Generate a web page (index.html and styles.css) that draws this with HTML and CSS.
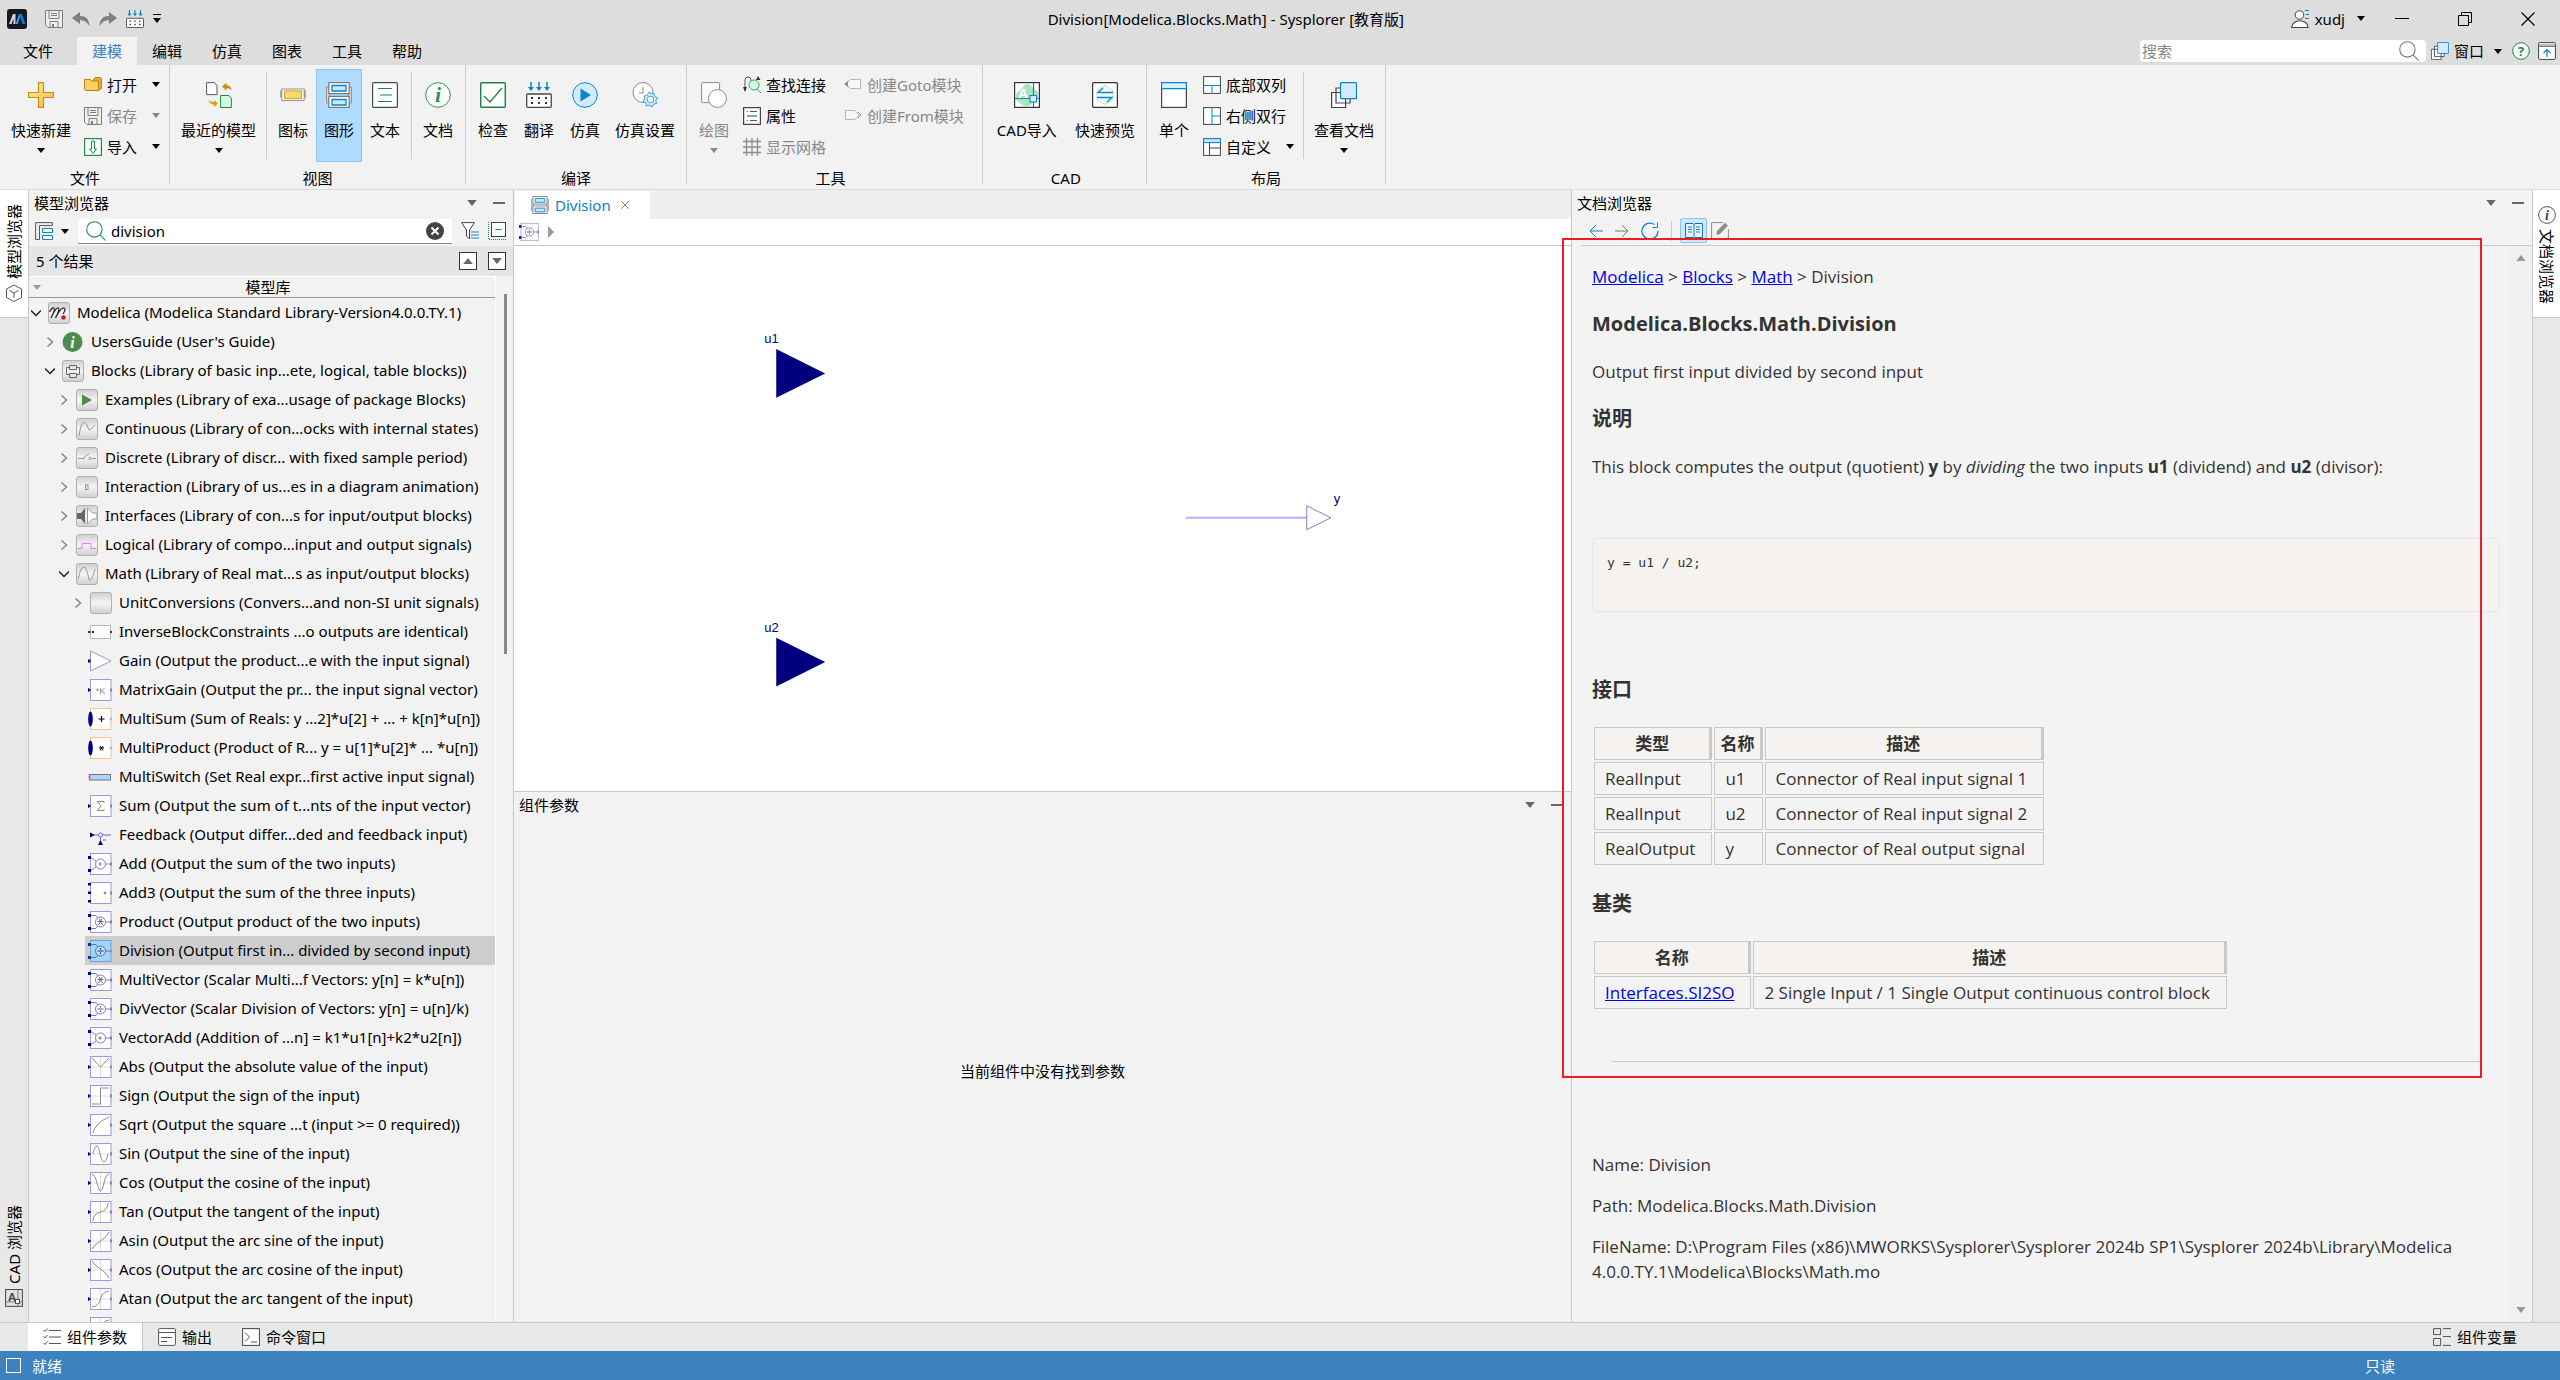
FILE: index.html
```html
<!DOCTYPE html>
<html lang="zh-CN">
<head>
    <meta charset="UTF-8">
    <meta name="viewport" content="width=device-width, initial-scale=1.0">
    <title>Division[Modelica.Blocks.Math] - Sysplorer [教育版]</title>
    <link rel="stylesheet" href="styles.css">
</head>
<body>
    <!-- icon definitions -->
    <svg class="defs" aria-hidden="true">
        <defs>
            <linearGradient id="g-pkg" x1="0" y1="0" x2="0" y2="1">
                <stop offset="0" stop-color="#cfcfcf"/><stop offset="0.5" stop-color="#f4f4f4"/><stop offset="1" stop-color="#cfcfcf"/>
            </linearGradient>
            <linearGradient id="g-gold" x1="0" y1="0" x2="1" y2="1">
                <stop offset="0" stop-color="#ffe9a8"/><stop offset="1" stop-color="#f4bd3a"/>
            </linearGradient>
        </defs>
        <symbol id="i-logo" viewBox="0 0 20 20"><rect width="20" height="20" rx="3" fill="#15181c"/><path d="M2 15 6 5h2.500v10H6.500V9.500L4.500 15z" fill="#cfd4d8"/><path d="M8.500 15 12 5h2l-3 10z" fill="#2f9bf0"/><path d="M12 5h3l3.500 10H15.500L13.500 9z" fill="#0d7ce0"/></symbol>
        <symbol id="i-save" viewBox="0 0 18 18"><path d="M.5.5h17v17H3L.5 15z" fill="#efefef" stroke="#7d7d7d"/><path d="M4 .5v8h10v-8M5 11.500h8v6H5zM6 3.500h6M6 5.500h6" fill="none" stroke="#7d7d7d"/><path d="M7 14h2v3H7z" fill="#7d7d7d"/></symbol>
        <symbol id="i-undo" viewBox="0 0 18 18"><path d="M0 8 8 2v4c6 0 9 3 9.500 10C15 12 12 10 8 10v4z" fill="#7f7f7f"/></symbol>
        <symbol id="i-redo" viewBox="0 0 18 18"><path d="M18 8 10 2v4C4 6 1 9 .5 16 3 12 6 10 10 10v4z" fill="#7f7f7f"/></symbol>
        <symbol id="i-trans" viewBox="0 0 26 26"><path d="M5 0v7M13 0v7M21 0v7" stroke="#0a84cc" stroke-width="1.500"/><path d="M2 5l3 4 3-4zM10 5l3 4 3-4zM18 5l3 4 3-4z" fill="#0a84cc"/><rect x=".7" y="12" width="24.600" height="13.300" rx="1" fill="#fff" stroke="#4a4a4a" stroke-width="1.300"/><path d="M5 16h2M12 16h2M19 16h2M5 21h2M12 21h2M19 21h2" stroke="#333" stroke-width="2"/></symbol>
        <symbol id="i-down" viewBox="0 0 8 5"><path d="M0 0h8L4 5z" fill="currentColor"/></symbol>
        <symbol id="i-up" viewBox="0 0 8 5"><path d="M0 5h8L4 0z" fill="currentColor"/></symbol>
        <symbol id="i-more" viewBox="0 0 8 9"><path d="M0 .5h8" stroke="#000"/><path d="M0 4h8L4 9z"/></symbol>
        <symbol id="i-user" viewBox="0 0 18 18"><circle cx="8.500" cy="5" r="4.300" fill="#fff" stroke="#444"/><path d="M.7 17.500c0-9 16.400-9 16.400 0z" fill="#fff" stroke="#444" stroke-width="1.200"/><path d="M14 .5h4M15 4.500h3M14 8.500h4" stroke="#0a84cc"/></symbol>
        <symbol id="i-min" viewBox="0 0 14 14"><path d="M0 6.500h14" stroke="#000"/></symbol>
        <symbol id="i-restore" viewBox="0 0 14 14"><path d="M.5 3.500h10v10H.5zM3.500 3.500v-3h10v10h-3" fill="none" stroke="#000"/></symbol>
        <symbol id="i-close" viewBox="0 0 14 14"><path d="M.5.5l13 13M13.500.5l-13 13" stroke="currentColor" stroke-width="1.200"/></symbol>
        <symbol id="i-search" viewBox="0 0 19 19"><circle cx="8" cy="8" r="7.300" fill="none" stroke="currentColor"/><path d="M13.500 13.500 18.500 18.500" stroke="currentColor"/></symbol>
        <symbol id="i-stack" viewBox="0 0 26 26"><path d="M.6 10.500h14v15H.6z M5 6h14v15H5z" fill="#fff" stroke="#444" stroke-width="1.200"/><rect x="9.500" y=".6" width="16" height="16" rx="1" fill="#d2ebff" stroke="#0a84cc" stroke-width="1.300"/></symbol>
        <symbol id="i-pin" viewBox="0 0 18 18"><rect x=".6" y=".6" width="16.800" height="16.800" rx="1" fill="#fff" stroke="#444"/><path d="M1 2h16v2H1z" fill="#bbb"/><path d="M1 4.500h16" stroke="#777"/><path d="M9 15V7.500M5.500 11 9 7.500l3.500 3.500" fill="none" stroke="#0a84cc" stroke-width="1.200"/></symbol>
        <symbol id="i-plus" viewBox="0 0 26 26"><path d="M10.500.6h5v9.900h9.900v5h-9.900v9.900h-5v-9.900H.6v-5h9.900z" fill="url(#g-gold)" stroke="#c89018" stroke-width="1.200"/></symbol>
        <symbol id="i-open" viewBox="0 0 18 18"><path d="M9 4.500 11 1.500h5.500l1 1v10l-4 2.500z" fill="#e9ae25" stroke="#b98510"/><path d="M.5 3.500h6l1 1.500h7v9.500H1.500L.5 13z" fill="#fbd063" stroke="#b98510"/></symbol>
        <symbol id="i-import" viewBox="0 0 18 18"><rect x=".6" y=".6" width="16.800" height="16.800" fill="#fff" stroke="#1e8a4c" stroke-width="1.200"/><path d="M7.500 3h3v8h2L9 15.500 5.500 11h2z" fill="#eafff2" stroke="#1e8a4c"/></symbol>
        <symbol id="i-recent" viewBox="0 0 26 26"><path d="M.6.6h7.900l2.500 3v9H.6z" fill="#fff" stroke="#555"/><path d="M14.600 13.500h8.400l2.400 3v9H14.600z" fill="#d3fbe2" stroke="#1e8a4c"/><path d="M16 4.500 20.500.8v2.400c3 0 5 2 5 5.300-1.500-2-3-2.600-5-2.600v2.500z" fill="#c48d12"/><path d="M12 21.500 8 25v-2.300c-3 0-5-2-6-4.700 1.500 1.500 3.500 2 6 2V18z" fill="#d9a11a"/></symbol>
        <symbol id="i-iconview" viewBox="0 0 28 26"><path d="M0 8h28v8H0z" fill="#a9a9a9"/><rect x="2" y="6.500" width="24" height="12.500" fill="#fff" stroke="#8c8c8c"/><rect x="5" y="8.500" width="18" height="8.500" fill="#ffd76a" stroke="#c99a22"/></symbol>
        <symbol id="i-diagram" viewBox="0 0 26 26"><path d="M.6 5h3v16h-3zM22.400 5h3v16h-3z" fill="#ddd" stroke="#8c8c8c"/><rect x="2.800" y=".6" width="20.400" height="11" fill="#fff" stroke="#777" stroke-width="1.200"/><rect x="2.800" y="14.400" width="20.400" height="11" fill="#fff" stroke="#777" stroke-width="1.200"/><path d="M6 3.500h14v5.500H6zM6 17.500h14V23H6z" fill="#c8e8ff" stroke="#0a84cc" stroke-width="1.300"/></symbol>
        <symbol id="i-text" viewBox="0 0 26 26"><rect x=".6" y=".6" width="24.800" height="24.800" rx="1" fill="#fff" stroke="#4a4a4a" stroke-width="1.200"/><path d="M6 6.500h14M8 13h12M6 19.500h14" stroke="#1e8a4c" stroke-width="1.200"/></symbol>
        <symbol id="i-check" viewBox="0 0 26 26"><rect x=".7" y=".7" width="24.600" height="24.600" rx="1" fill="#fff" stroke="#1a8048" stroke-width="1.400"/><path d="M4 14l6 6L22 6" fill="none" stroke="#1a8048" stroke-width="1.200"/></symbol>
        <symbol id="i-play" viewBox="0 0 26 26"><circle cx="13" cy="13" r="12.300" fill="#d2ebff" stroke="#0a84cc"/><path d="M8.500 6.500 19 13 8.500 19.500z" fill="#0a84cc"/></symbol>
        <symbol id="i-simset" viewBox="0 0 26 26"><circle cx="11" cy="10.500" r="10" fill="#fff" stroke="#8c8c8c"/><path d="M11 5v6H7" fill="none" stroke="#8c8c8c"/><path d="M17.500 9.700l1.500 2.300 3-.7.600 3 2.900 1.700-1.700 2.500.7 3-3 .6-1.500 2.900-2.500-1.700-3 .7-.6-3-2.900-1.500 1.700-2.500-.7-3 3-.6z" fill="#d2ebff" stroke="#3d9fdd"/><circle cx="18.500" cy="17.500" r="3.300" fill="#fff" stroke="#3d9fdd"/></symbol>
        <symbol id="i-draw" viewBox="0 0 26 26"><rect x=".6" y=".6" width="18" height="20" rx="1" fill="#fafafa" stroke="#8c8c8c"/><circle cx="16.500" cy="16.500" r="9" fill="#fff" stroke="#8c8c8c"/></symbol>
        <symbol id="i-find" viewBox="0 0 18 18"><path d="M2 15V4q0-3 3-3t3 3v3" fill="none" stroke="#555"/><path d="M0 11h4l-2 5zM13 4l2-4 2.500 4z" fill="#333"/><circle cx="11" cy="9" r="5" fill="#d3fbe2" stroke="#3ba868"/><path d="M14 13l4 4" stroke="#3ba868"/></symbol>
        <symbol id="i-prop" viewBox="0 0 18 18"><rect x=".6" y=".6" width="16.800" height="16.800" fill="#fff" stroke="#444" stroke-width="1.200"/><path d="M4 4.500h1M7 4.500h7M4 13.500h1M7 13.500h7" stroke="#555"/><path d="M4 9h10" stroke="#3ba868" stroke-width="1.500"/></symbol>
        <symbol id="i-grid" viewBox="0 0 18 18"><path d="M3.500 0v18M9 0v18M14.500 0v18M0 3.500h18M0 9h18M0 14.500h18" stroke="#8c8c8c" stroke-width="1.300"/></symbol>
        <symbol id="i-goto" viewBox="0 0 18 18"><path d="M6 3.500h10.500v9H6L2 8z" fill="#f7f7f7" stroke="#b5b5b5"/><path d="M0 8l4-3v6z" fill="#8c8c8c"/></symbol>
        <symbol id="i-from" viewBox="0 0 18 18"><path d="M1.500 3.500H11L15 8l-4 4.500H1.500z" fill="#f7f7f7" stroke="#b5b5b5"/><path d="M14 5l3 3-3 3" fill="none" stroke="#8c8c8c"/></symbol>
        <symbol id="i-preview" viewBox="0 0 26 26"><rect x=".6" y=".6" width="24.800" height="24.800" rx="1" fill="#fff" stroke="#333" stroke-width="1.200"/><path d="M13 3.500l8 5v9l-8 5-8-5v-9z" fill="#effcf4" stroke="#b8e8cb"/><path d="M21 10.500H6l5-4.500M5 15.500h15l-5 4.500" fill="none" stroke="#0a84cc" stroke-width="1.300"/></symbol>
        <symbol id="i-single" viewBox="0 0 26 26"><rect x=".6" y=".6" width="24.800" height="24.800" fill="#fff" stroke="#444" stroke-width="1.200"/><path d="M.6.6h24.800v6H.6z" fill="#d9f1ff" stroke="#0a84cc" stroke-width="1.200"/></symbol>
        <symbol id="i-bottom2" viewBox="0 0 18 18"><rect x=".6" y=".6" width="16.800" height="16.800" fill="#fff" stroke="#444"/><path d="M0 9.500h18M9 9.500V18" stroke="#0a84cc"/></symbol>
        <symbol id="i-right2" viewBox="0 0 18 18"><rect x=".6" y=".6" width="16.800" height="16.800" fill="#fff" stroke="#444"/><path d="M9 0v18M9 9h9" stroke="#0a84cc"/></symbol>
        <symbol id="i-custom" viewBox="0 0 18 18"><rect x=".6" y=".6" width="16.800" height="16.800" fill="#fff" stroke="#444"/><path d="M.6.6h16.800v4H.6z" fill="#bfe4ff" stroke="#0a84cc"/><path d="M6.500 5v12M6.500 10h11" stroke="#444"/></symbol>
        <symbol id="i-cube" viewBox="0 0 18 18"><path d="M9 1l7.500 4v8.500L9 17.500l-7.500-4V5zM4.500 6.500 9 9l4.500-2.500M9 9v5" fill="#fff" stroke="#555"/></symbol>
        <symbol id="i-treemode" viewBox="0 0 18 18"><path d="M.6 17.500V.6h16.800v3H4.500v14z" fill="#eee" stroke="#555"/><path d="M7.500 6.500h10v4h-10zM7.500 13.500h10v4h-10z" fill="#fff" stroke="#0a84cc"/></symbol>
        <symbol id="i-clear" viewBox="0 0 18 18"><circle cx="9" cy="9" r="9" fill="#444"/><path d="M5.500 5.500l7 7M12.500 5.500l-7 7" stroke="#fff" stroke-width="2"/></symbol>
        <symbol id="i-filter" viewBox="0 0 18 18"><path d="M.6.6h12.800L8.500 8v9L5.500 14V8z" fill="#fff" stroke="#444"/><path d="M10 10h8M10 13h8M10 16h8" stroke="#0a84cc"/></symbol>
        <symbol id="i-collapse" viewBox="0 0 18 18"><rect x="3.500" y=".5" width="14" height="14" fill="#fff" stroke="#444"/><path d="M7.500 7.500h6" stroke="#1e8a4c"/><path d="M.5 0v17.500H18" fill="none" stroke="#1e8a4c" stroke-dasharray="1 1"/></symbol>
        <symbol id="i-right" viewBox="0 0 10 10"><path d="M2.500.5 7.500 5l-5 4.500" fill="none" stroke="#888" stroke-width="1.500"/></symbol>
        <symbol id="i-expanded" viewBox="0 0 10 10"><path d="M0 2.500l5 5 5-5" fill="none" stroke="#222" stroke-width="1.500"/></symbol>
        <symbol id="i-back" viewBox="0 0 14 14"><path d="M14 7H1M7 1 1 7l6 6" fill="none" stroke="#0a84cc"/></symbol>
        <symbol id="i-fwd" viewBox="0 0 14 14"><path d="M0 7h13M7 1l6 6-6 6" fill="none" stroke="#777"/></symbol>
        <symbol id="i-refresh" viewBox="0 0 18 18"><path d="M13.500 2.500A8 8 0 1 0 17 9" fill="none" stroke="#0a84cc" stroke-width="1.200"/><path d="M16.500.5v5h-5" fill="none" stroke="#0a84cc"/></symbol>
        <symbol id="i-book" viewBox="0 0 18 18"><path d="M.6 1.500H8L9 2.500l1-1h7.400v14H10l-1 1-1-1H.6z" fill="#eaf6ff" stroke="#0a6fb0"/><path d="M9 2v14.500M3 5h4M3 7.500h4M3 10h4M11 5h4M11 7.500h4M11 10h4" stroke="#0a84cc"/></symbol>
        <symbol id="i-edit" viewBox="0 0 18 18"><path d="M12 .6H.6v16.800h16.800V7" fill="none" stroke="#8c8c8c"/><path d="M6 9 14 .8l3 2.700L9 12l-3.500 1z" fill="#8c8c8c"/></symbol>
        <symbol id="i-params" viewBox="0 0 18 18"><path d="M6 2.500h12M6 9h12M6 15.500h12" stroke="#555"/><path d="M.5 2l1.500 1.500L4.500.5M.5 8.500 2 10l2.500-3M.5 15l1.500 1.500 2.500-3" fill="none" stroke="#555"/></symbol>
        <symbol id="i-output" viewBox="0 0 18 18"><rect x=".6" y=".6" width="16.800" height="16.800" rx="1" fill="#fff" stroke="#555"/><path d="M1 4.500h16M3 9.500h11M3 13.500h6" stroke="#555"/></symbol>
        <symbol id="i-cmd" viewBox="0 0 18 18"><rect x=".6" y=".6" width="16.800" height="16.800" fill="#fff" stroke="#444"/><path d="M3 4.500 7.500 9 3 13.500M9 14h6" fill="none" stroke="#555"/></symbol>
        <symbol id="i-vars" viewBox="0 0 18 18"><path d="M.6.6h7v6h-7zM.6 10.500h7v7h-7zM10 .6h8M10 8.500h8M10 17.400h8" fill="none" stroke="#555"/></symbol>

        <!-- package icons, 24x22 -->
        <symbol id="p" viewBox="0 0 24 22"><rect x="2.500" y=".5" width="21" height="21" rx="2.500" fill="url(#g-pkg)" stroke="#b0b0b0"/></symbol>
        <symbol id="p-modelica" viewBox="0 0 24 22"><use href="#p"/><path d="M3.500 10Q6 5 8 6q1.500 1-3 10Q10 5 12.500 6q1.500 1-3 10Q15 5 18 6q2.500 1-1 6" fill="none" stroke="#222" stroke-width="1.200"/><circle cx="17.500" cy="15.500" r="2.300" fill="#c81e1e"/></symbol>
        <symbol id="p-blocks" viewBox="0 0 24 22"><use href="#p"/><path d="M9.500 5.500h7v4h-7zM9.500 13.500h7v4h-7zM9.500 7.500h-3v7h3M16.500 7.500h3v7h-3" fill="none" stroke="#666"/></symbol>
        <symbol id="p-examples" viewBox="0 0 24 22"><use href="#p"/><path d="M8 5.500 18 11 8 16.500z" fill="#4a8c4a"/></symbol>
        <symbol id="p-cont" viewBox="0 0 24 22"><use href="#p"/><path d="M5 18Q7 4 10 4q3 1 5 8 3-1 6-5" fill="none" stroke="#999"/></symbol>
        <symbol id="p-disc" viewBox="0 0 24 22"><use href="#p"/><path d="M4 11.500h5l6-5M17 11.500h5" fill="none" stroke="#999"/><circle cx="9.500" cy="11.500" r="1" fill="#999"/><circle cx="16" cy="11.500" r="1.200" fill="#fff" stroke="#999"/></symbol>
        <symbol id="p-inter" viewBox="0 0 24 22"><use href="#p"/><rect x="11.500" y="9" width="2.500" height="4.500" fill="#eef" stroke="#5a8a8a" stroke-width=".8"/></symbol>
        <symbol id="p-iface" viewBox="0 0 24 22"><use href="#p"/><path d="M3 8h4l4-5v16l-4-5H3z" fill="#666"/><path d="M13.500 3l5 5H23v6h-4.500l-5 5z" fill="#fff" stroke="#999"/></symbol>
        <symbol id="p-logic" viewBox="0 0 24 22"><use href="#p"/><path d="M4 14.500h4v-5h9v5h5" fill="none" stroke="#f07af0"/></symbol>
        <symbol id="p-math" viewBox="0 0 24 22"><use href="#p"/><path d="M4 16Q7 3 10 4t5 13q3 2 6-11" fill="none" stroke="#999"/></symbol>

        <!-- block icons, 24x22 -->
        <symbol id="b" viewBox="0 0 24 22"><rect x="2.500" y=".5" width="20.500" height="21" fill="#fff" stroke="#9a9ad4"/><path d="M22 9.500h2v3h-2z" fill="#8080c8"/></symbol>
        <symbol id="b1" viewBox="0 0 24 22"><use href="#b"/><path d="M0 9.500l2.500 1.500L0 12.500z" fill="#00007f" stroke="#00007f"/></symbol>
        <symbol id="b2" viewBox="0 0 24 22"><use href="#b"/><path d="M0 3h3v3H0zM0 16h3v3H0z" fill="#00007f"/></symbol>
        <symbol id="b-inv" viewBox="0 0 24 22"><rect x="2.500" y="4.500" width="20" height="13" fill="#fff" stroke="#b8b8b8"/><path d="M0 10h2.500v2H0zM4 10h2v2H4zM22 10h2v2h-2z" fill="#2a2a90"/></symbol>
        <symbol id="b-gain" viewBox="0 0 24 22"><path d="M2.500 1 23 11 2.500 21z" fill="#fff" stroke="#9a9ad4"/><path d="M0 9.500h2.500v3H0z" fill="#00007f"/></symbol>
        <symbol id="b-msum" viewBox="0 0 24 22"><rect x="2.500" y=".5" width="20.500" height="21" fill="#fff" stroke="#f0c490"/><ellipse cx="2.500" cy="11" rx="2.300" ry="7.500" fill="#00007f"/><path d="M10.500 11h6M13.500 8v6" stroke="#000" stroke-width="1.200"/><circle cx="23" cy="11" r="1" fill="#fff" stroke="#9a9ad4"/></symbol>
        <symbol id="b-mprod" viewBox="0 0 24 22"><rect x="2.500" y=".5" width="20.500" height="21" fill="#fff" stroke="#f0c490"/><ellipse cx="2.500" cy="11" rx="2.300" ry="7.500" fill="#00007f"/><path d="M11 11h5M12 9l3 4.500M15 9l-3 4.500" stroke="#000"/><circle cx="23" cy="11" r="1" fill="#fff" stroke="#9a9ad4"/></symbol>
        <symbol id="b-switch" viewBox="0 0 24 22"><rect x="1.500" y="8.500" width="21" height="5.500" fill="#aad5ff" stroke="#777"/><path d="M.5 9.500h2v3h-2z" fill="#f04ae0"/></symbol>
        <symbol id="b-sum" viewBox="0 0 24 22"><use href="#b1"/><path d="M16 8V6.500H9.500L13 11l-3.500 4.500H16V14" fill="none" stroke="#888"/></symbol>
        <symbol id="b-feed" viewBox="0 0 24 22"><path d="M2 8.500l5 2.500-5 2.500zM10 21l2.500-5 2.500 5z" fill="#00007f"/><path d="M6 11h4.500M14.500 11H23M12.500 13v4M15 16h3" stroke="#6a6ac0"/><circle cx="12.500" cy="11" r="2" fill="#fff" stroke="#6a6ac0"/></symbol>
        <symbol id="b-add" viewBox="0 0 24 22"><use href="#b2"/><path d="M3 4.500 8 8M3 17.500 8 14M18 11h5" stroke="#7a7ac8"/><circle cx="12.500" cy="11" r="5" fill="#fff" stroke="#7a7ac8"/><path d="M10.500 11h3M12 9.500v3" stroke="#666"/></symbol>
        <symbol id="b-add3" viewBox="0 0 24 22"><use href="#b"/><path d="M0 1h3v2.500H0zM0 9.500h3V12H0zM0 18h3v2.500H0z" fill="#00007f"/><path d="M15.500 11h3M17 9.500v3" stroke="#866"/></symbol>
        <symbol id="b-prod" viewBox="0 0 24 22"><use href="#b2"/><path d="M3 4.500h5l2 3M3 17.500h5l2-3M18 11h5" fill="none" stroke="#7a7ac8"/><circle cx="12.500" cy="11" r="5" fill="#fff" stroke="#7a7ac8"/><path d="M9.500 10.500h6M11 8l3.500 6M14 8l-3.500 6" stroke="#666"/></symbol>
        <symbol id="b-div" viewBox="0 0 24 22"><use href="#b2"/><path d="M3 4.500h5l2 3M3 17.500h5l2-3M18 11h5" fill="none" stroke="#7a7ac8"/><circle cx="12.500" cy="11" r="5" fill="#fff" stroke="#7a7ac8"/><path d="M9.500 11h6M12.500 8v1.500M12.500 12.500V14" stroke="#666" stroke-width="1.200"/></symbol>
        <symbol id="b-divsel" viewBox="0 0 24 22"><rect x="2.500" y=".5" width="20.500" height="21" fill="#a6d2f7" stroke="#6fa0d8"/><path d="M0 3h3v3H0zM0 16h3v3H0z" fill="#0a3a90"/><path d="M3 4.500h5l2 3M3 17.500h5l2-3M18 11h6" fill="none" stroke="#4a78c0"/><circle cx="12.500" cy="11" r="5" fill="#b8dcfa" stroke="#4a78c0"/><path d="M9.500 11h6M12.500 8v1.500M12.500 12.500V14" stroke="#335" stroke-width="1.200"/></symbol>
        <symbol id="b-axes" viewBox="0 0 24 22"><use href="#b1"/><path d="M3 11h19M12.500 1v20" stroke="#dcdcdc"/></symbol>
        <symbol id="b-abs" viewBox="0 0 24 22"><use href="#b-axes"/><path d="M4 2l8.500 9L21 2" fill="none" stroke="#8c8c8c"/></symbol>
        <symbol id="b-sign" viewBox="0 0 24 22"><use href="#b-axes"/><path d="M4 19h8.500V3H21" fill="none" stroke="#8c8c8c"/></symbol>
        <symbol id="b-sqrt" viewBox="0 0 24 22"><use href="#b1"/><path d="M5 19Q7 9 21 3" fill="none" stroke="#8c8c8c"/></symbol>
        <symbol id="b-sin" viewBox="0 0 24 22"><use href="#b1"/><path d="M4 11h17" stroke="#dcdcdc"/><path d="M5 11Q7 2 9 3t3 8q2 8 4 8t4-8" fill="none" stroke="#8c8c8c"/></symbol>
        <symbol id="b-cos" viewBox="0 0 24 22"><use href="#b-axes"/><path d="M4 2q3 1 5 9t3.500 8q2 0 3.500-8t5-9" fill="none" stroke="#8c8c8c"/></symbol>
        <symbol id="b-tan" viewBox="0 0 24 22"><use href="#b-axes"/><path d="M5 20q0-7 7.500-9T20 2" fill="none" stroke="#8c8c8c"/></symbol>
        <symbol id="b-asin" viewBox="0 0 24 22"><use href="#b-axes"/><path d="M4 19q2-4 8.500-8T21 2" fill="none" stroke="#8c8c8c"/></symbol>
        <symbol id="b-acos" viewBox="0 0 24 22"><use href="#b-axes"/><path d="M4 2q2 4 8.500 8T21 19" fill="none" stroke="#8c8c8c"/></symbol>
        <symbol id="b-atan" viewBox="0 0 24 22"><use href="#b-axes"/><path d="M4 19q7-1 8.500-8T21 3" fill="none" stroke="#8c8c8c"/></symbol>
    </svg>

    <header class="titlebar">
        <div class="quick-tools">
            <svg class="icon-logo"><use href="#i-logo"/></svg>
            <button aria-label="保存"><svg class="icon-s"><use href="#i-save"/></svg></button>
            <button aria-label="撤销"><svg class="icon-s"><use href="#i-undo"/></svg></button>
            <button aria-label="重做"><svg class="icon-s"><use href="#i-redo"/></svg></button>
            <button aria-label="翻译"><svg class="icon-s"><use href="#i-trans"/></svg></button>
            <button aria-label="更多"><svg class="icon-more"><use href="#i-more"/></svg></button>
        </div>
        <div class="window-title">Division[Modelica.Blocks.Math] - Sysplorer [教育版]</div>
        <div class="window-tools">
            <button class="user"><svg class="icon-s"><use href="#i-user"/></svg>xudj<svg class="caret"><use href="#i-down"/></svg></button>
            <button aria-label="最小化"><svg class="icon-w"><use href="#i-min"/></svg></button>
            <button aria-label="还原"><svg class="icon-w"><use href="#i-restore"/></svg></button>
            <button aria-label="关闭"><svg class="icon-w"><use href="#i-close"/></svg></button>
        </div>
    </header>

    <nav class="menubar">
        <button class="menu menu-file">文件</button>
        <button class="menu active">建模</button>
        <button class="menu">编辑</button>
        <button class="menu">仿真</button>
        <button class="menu">图表</button>
        <button class="menu">工具</button>
        <button class="menu">帮助</button>
        <div class="menubar-tools">
            <label class="search-top"><input type="text" placeholder="搜索" aria-label="搜索"><svg class="icon-m"><use href="#i-search"/></svg></label>
            <button class="window-menu"><svg class="icon-s"><use href="#i-stack"/></svg>窗口<svg class="caret"><use href="#i-down"/></svg></button>
            <button aria-label="帮助"><svg class="icon-s" viewBox="0 0 18 18"><circle cx="9" cy="9" r="8.300" fill="#fff" stroke="#1e8a4c"/><text x="9" y="13.500" text-anchor="middle" class="glyph-help">?</text></svg></button>
            <button aria-label="折叠功能区"><svg class="icon-s"><use href="#i-pin"/></svg></button>
        </div>
    </nav>

    <section class="ribbon">
        <div class="group group-file">
            <div class="group-items">
                <button class="big wide"><svg class="icon-l"><use href="#i-plus"/></svg><span>快速新建</span><svg class="caret"><use href="#i-down"/></svg></button>
                <div class="stack">
                    <button class="small"><svg class="icon-s"><use href="#i-open"/></svg>打开<svg class="caret"><use href="#i-down"/></svg></button>
                    <button class="small disabled"><svg class="icon-s"><use href="#i-save"/></svg>保存<svg class="caret"><use href="#i-down"/></svg></button>
                    <button class="small"><svg class="icon-s"><use href="#i-import"/></svg>导入<svg class="caret"><use href="#i-down"/></svg></button>
                </div>
            </div>
            <div class="group-label">文件</div>
        </div>
        <div class="group">
            <div class="group-items">
                <button class="big wide"><svg class="icon-l"><use href="#i-recent"/></svg><span>最近的模型</span><svg class="caret"><use href="#i-down"/></svg></button>
                <i class="divider"></i>
                <button class="big"><svg class="icon-l"><use href="#i-iconview"/></svg><span>图标</span></button>
                <button class="big selected"><svg class="icon-l"><use href="#i-diagram"/></svg><span>图形</span></button>
                <button class="big"><svg class="icon-l"><use href="#i-text"/></svg><span>文本</span></button>
                <i class="divider"></i>
                <button class="big"><svg class="icon-l" viewBox="0 0 26 26"><circle cx="13" cy="13" r="12.300" fill="#fff" stroke="#2a9455"/><text x="13" y="20" text-anchor="middle" class="glyph-info">i</text></svg><span>文档</span></button>
            </div>
            <div class="group-label">视图</div>
        </div>
        <div class="group">
            <div class="group-items">
                <button class="big"><svg class="icon-l"><use href="#i-check"/></svg><span>检查</span></button>
                <button class="big"><svg class="icon-l"><use href="#i-trans"/></svg><span>翻译</span></button>
                <button class="big"><svg class="icon-l"><use href="#i-play"/></svg><span>仿真</span></button>
                <button class="big wide"><svg class="icon-l"><use href="#i-simset"/></svg><span>仿真设置</span></button>
            </div>
            <div class="group-label">编译</div>
        </div>
        <div class="group group-tools">
            <div class="group-items">
                <button class="big disabled"><svg class="icon-l"><use href="#i-draw"/></svg><span>绘图</span><svg class="caret"><use href="#i-down"/></svg></button>
                <div class="stack">
                    <button class="small"><svg class="icon-s"><use href="#i-find"/></svg>查找连接</button>
                    <button class="small"><svg class="icon-s"><use href="#i-prop"/></svg>属性</button>
                    <button class="small disabled"><svg class="icon-s"><use href="#i-grid"/></svg>显示网格</button>
                </div>
                <div class="stack stack-blocks">
                    <button class="small disabled"><svg class="icon-s"><use href="#i-goto"/></svg>创建Goto模块</button>
                    <button class="small disabled"><svg class="icon-s"><use href="#i-from"/></svg>创建From模块</button>
                </div>
            </div>
            <div class="group-label">工具</div>
        </div>
        <div class="group group-cad">
            <div class="group-items">
                <button class="big wide"><svg class="icon-l" viewBox="0 0 26 26"><rect x=".6" y=".6" width="24.800" height="24.800" fill="#fff" stroke="#333" stroke-width="1.200"/><path d="M2 12 12 2h3l9 8v6L14 25h-3L2 18z" fill="#a9e6bf"/><text x="9" y="16" text-anchor="middle" class="glyph-cad">A</text><path d="M19.500 1v24M1 16.500h24" stroke="#0a84cc" stroke-width="1.200"/><rect x="16" y="13.500" width="6.500" height="6.500" fill="#d2ebff" stroke="#0a84cc"/></svg><span>CAD导入</span></button>
                <button class="big wide"><svg class="icon-l"><use href="#i-preview"/></svg><span>快速预览</span></button>
            </div>
            <div class="group-label">CAD</div>
        </div>
        <div class="group">
            <div class="group-items">
                <button class="big"><svg class="icon-l"><use href="#i-single"/></svg><span>单个</span></button>
                <div class="stack stack-layout">
                    <button class="small"><svg class="icon-s"><use href="#i-bottom2"/></svg>底部双列</button>
                    <button class="small"><svg class="icon-s"><use href="#i-right2"/></svg>右侧双行</button>
                    <button class="small"><svg class="icon-s"><use href="#i-custom"/></svg>自定义<svg class="caret"><use href="#i-down"/></svg></button>
                </div>
                <i class="divider"></i>
                <button class="big wide"><svg class="icon-l"><use href="#i-stack"/></svg><span>查看文档</span><svg class="caret"><use href="#i-down"/></svg></button>
            </div>
            <div class="group-label">布局</div>
        </div>
    </section>

    <main class="workspace">
        <aside class="rail rail-left">
            <button class="rail-tab active"><svg class="icon-s"><use href="#i-cube"/></svg>模型浏览器</button>
            <button class="rail-tab"><svg class="icon-s" viewBox="0 0 18 18"><rect x=".6" y=".6" width="16.800" height="16.800" fill="#e2e2e2" stroke="#444"/><text x="7" y="12" text-anchor="middle" class="glyph-a">A</text><path d="M13 1v16M1 13h16" stroke="#777"/><rect x="10.500" y="10.500" width="4" height="4" fill="#fff" stroke="#444"/></svg>CAD 浏览器</button>
        </aside>

        <section class="browser">
            <div class="pane-head"><span>模型浏览器</span><button aria-label="选项"><svg class="caret-lg"><use href="#i-down"/></svg></button><button class="pane-hide" aria-label="隐藏"></button></div>
            <div class="filter-row">
                <button class="mode" aria-label="显示方式"><svg class="icon-s"><use href="#i-treemode"/></svg><svg class="caret"><use href="#i-down"/></svg></button>
                <label class="filter-box"><svg class="icon-m"><use href="#i-search"/></svg><input type="text" value="division" aria-label="搜索模型"><svg class="icon-s"><use href="#i-clear"/></svg></label>
                <button aria-label="筛选"><svg class="icon-s"><use href="#i-filter"/></svg></button>
                <button aria-label="全部折叠"><svg class="icon-s"><use href="#i-collapse"/></svg></button>
            </div>
            <div class="result-row">
                <span>5 个结果</span>
                <button class="step" aria-label="上一个"><svg class="caret-lg"><use href="#i-up"/></svg></button>
                <button class="step" aria-label="下一个"><svg class="caret-lg"><use href="#i-down"/></svg></button>
            </div>
            <div class="tree-wrap">
                <div class="tree-main">
                    <div class="tree-head"><svg class="caret"><use href="#i-down"/></svg><span>模型库</span></div>
                    <ul class="tree">
                        <li class="l1"><svg class="chev"><use href="#i-expanded"/></svg><button><svg class="icon-t"><use href="#p-modelica"/></svg><span>Modelica (Modelica Standard Library-Version4.0.0.TY.1)</span></button></li>
                        <li class="l2"><svg class="chev"><use href="#i-right"/></svg><button><svg class="icon-t" viewBox="0 0 24 22"><circle cx="12.500" cy="11" r="10" fill="#4a8c4a"/><text x="12.500" y="16.500" text-anchor="middle" class="glyph-guide">i</text></svg><span>UsersGuide (User's Guide)</span></button></li>
                        <li class="l2"><svg class="chev"><use href="#i-expanded"/></svg><button><svg class="icon-t"><use href="#p-blocks"/></svg><span>Blocks (Library of basic inp...ete, logical, table blocks))</span></button></li>
                        <li class="l3"><svg class="chev"><use href="#i-right"/></svg><button><svg class="icon-t"><use href="#p-examples"/></svg><span>Examples (Library of exa...usage of package Blocks)</span></button></li>
                        <li class="l3"><svg class="chev"><use href="#i-right"/></svg><button><svg class="icon-t"><use href="#p-cont"/></svg><span>Continuous (Library of con...ocks with internal states)</span></button></li>
                        <li class="l3"><svg class="chev"><use href="#i-right"/></svg><button><svg class="icon-t"><use href="#p-disc"/></svg><span>Discrete (Library of discr... with fixed sample period)</span></button></li>
                        <li class="l3"><svg class="chev"><use href="#i-right"/></svg><button><svg class="icon-t"><use href="#p-inter"/></svg><span>Interaction (Library of us...es in a diagram animation)</span></button></li>
                        <li class="l3"><svg class="chev"><use href="#i-right"/></svg><button><svg class="icon-t"><use href="#p-iface"/></svg><span>Interfaces (Library of con...s for input/output blocks)</span></button></li>
                        <li class="l3"><svg class="chev"><use href="#i-right"/></svg><button><svg class="icon-t"><use href="#p-logic"/></svg><span>Logical (Library of compo...input and output signals)</span></button></li>
                        <li class="l3"><svg class="chev"><use href="#i-expanded"/></svg><button><svg class="icon-t"><use href="#p-math"/></svg><span>Math (Library of Real mat...s as input/output blocks)</span></button></li>
                        <li class="l4"><svg class="chev"><use href="#i-right"/></svg><button><svg class="icon-t"><use href="#p"/></svg><span>UnitConversions (Convers...and non-SI unit signals)</span></button></li>
                        <li class="l4 leaf"><button><svg class="icon-t"><use href="#b-inv"/></svg><span>InverseBlockConstraints ...o outputs are identical)</span></button></li>
                        <li class="l4 leaf"><button><svg class="icon-t"><use href="#b-gain"/></svg><span>Gain (Output the product...e with the input signal)</span></button></li>
                        <li class="l4 leaf"><button><svg class="icon-t" viewBox="0 0 24 22"><use href="#b1"/><text x="12.500" y="14.500" text-anchor="middle" class="glyph-small">*K</text></svg><span>MatrixGain (Output the pr... the input signal vector)</span></button></li>
                        <li class="l4 leaf"><button><svg class="icon-t"><use href="#b-msum"/></svg><span>MultiSum (Sum of Reals: y ...2]*u[2] + ... + k[n]*u[n])</span></button></li>
                        <li class="l4 leaf"><button><svg class="icon-t"><use href="#b-mprod"/></svg><span>MultiProduct (Product of R... y = u[1]*u[2]* ... *u[n])</span></button></li>
                        <li class="l4 leaf"><button><svg class="icon-t"><use href="#b-switch"/></svg><span>MultiSwitch (Set Real expr...first active input signal)</span></button></li>
                        <li class="l4 leaf"><button><svg class="icon-t"><use href="#b-sum"/></svg><span>Sum (Output the sum of t...nts of the input vector)</span></button></li>
                        <li class="l4 leaf"><button><svg class="icon-t"><use href="#b-feed"/></svg><span>Feedback (Output differ...ded and feedback input)</span></button></li>
                        <li class="l4 leaf"><button><svg class="icon-t"><use href="#b-add"/></svg><span>Add (Output the sum of the two inputs)</span></button></li>
                        <li class="l4 leaf"><button><svg class="icon-t"><use href="#b-add3"/></svg><span>Add3 (Output the sum of the three inputs)</span></button></li>
                        <li class="l4 leaf"><button><svg class="icon-t"><use href="#b-prod"/></svg><span>Product (Output product of the two inputs)</span></button></li>
                        <li class="l4 leaf current"><button><svg class="icon-t"><use href="#b-divsel"/></svg><span>Division (Output first in... divided by second input)</span></button></li>
                        <li class="l4 leaf"><button><svg class="icon-t"><use href="#b-prod"/></svg><span>MultiVector (Scalar Multi...f Vectors: y[n] = k*u[n])</span></button></li>
                        <li class="l4 leaf"><button><svg class="icon-t"><use href="#b-div"/></svg><span>DivVector (Scalar Division of Vectors: y[n] = u[n]/k)</span></button></li>
                        <li class="l4 leaf"><button><svg class="icon-t"><use href="#b-add"/></svg><span>VectorAdd (Addition of ...n] = k1*u1[n]+k2*u2[n])</span></button></li>
                        <li class="l4 leaf"><button><svg class="icon-t"><use href="#b-abs"/></svg><span>Abs (Output the absolute value of the input)</span></button></li>
                        <li class="l4 leaf"><button><svg class="icon-t"><use href="#b-sign"/></svg><span>Sign (Output the sign of the input)</span></button></li>
                        <li class="l4 leaf"><button><svg class="icon-t"><use href="#b-sqrt"/></svg><span>Sqrt (Output the square ...t (input &gt;= 0 required))</span></button></li>
                        <li class="l4 leaf"><button><svg class="icon-t"><use href="#b-sin"/></svg><span>Sin (Output the sine of the input)</span></button></li>
                        <li class="l4 leaf"><button><svg class="icon-t"><use href="#b-cos"/></svg><span>Cos (Output the cosine of the input)</span></button></li>
                        <li class="l4 leaf"><button><svg class="icon-t"><use href="#b-tan"/></svg><span>Tan (Output the tangent of the input)</span></button></li>
                        <li class="l4 leaf"><button><svg class="icon-t"><use href="#b-asin"/></svg><span>Asin (Output the arc sine of the input)</span></button></li>
                        <li class="l4 leaf"><button><svg class="icon-t"><use href="#b-acos"/></svg><span>Acos (Output the arc cosine of the input)</span></button></li>
                        <li class="l4 leaf"><button><svg class="icon-t"><use href="#b-atan"/></svg><span>Atan (Output the arc tangent of the input)</span></button></li>
                        <li class="l4 leaf"><button><svg class="icon-t"><use href="#b-atan"/></svg><span>Atan2 (Output atan(u1/u2) of the inputs u1 and u2)</span></button></li>
                    </ul>
                </div>
                <div class="scroll"><i class="thumb"></i></div>
            </div>
        </section>

        <section class="editor">
            <div class="doc-tabs"><div class="doc-tab"><svg class="icon-s"><use href="#i-diagram"/></svg><span>Division</span><button aria-label="关闭"><svg class="icon-x"><use href="#i-close"/></svg></button></div></div>
            <div class="path-row"><svg class="icon-m"><use href="#b-div"/></svg><svg class="path-arrow" viewBox="0 0 6 12"><path d="M0 0l6 6-6 6z" fill="#999"/></svg></div>
            <div class="canvas">
                <svg viewBox="0 0 1057 545">
                    <path d="M262 103v49l49-24.500zM262 392v49l49-24.500z" fill="#00007f"/>
                    <path d="M672 272h121" stroke="#b0b0ff" stroke-width="2"/>
                    <path d="M793 260v24l24-12z" fill="#fff" stroke="#8080c8"/>
                    <text x="250" y="97">u1</text>
                    <text x="250" y="386">u2</text>
                    <text x="820" y="257">y</text>
                </svg>
            </div>
            <div class="params">
                <div class="pane-head"><span>组件参数</span><button aria-label="选项"><svg class="caret-lg"><use href="#i-down"/></svg></button><button class="pane-hide" aria-label="隐藏"></button></div>
                <p class="empty">当前组件中没有找到参数</p>
            </div>
        </section>

        <section class="docs">
            <div class="pane-head"><span>文档浏览器</span><button aria-label="选项"><svg class="caret-lg"><use href="#i-down"/></svg></button><button class="pane-hide" aria-label="隐藏"></button></div>
            <div class="docs-tools">
                <button aria-label="后退"><svg class="icon-w"><use href="#i-back"/></svg></button>
                <button aria-label="前进"><svg class="icon-w"><use href="#i-fwd"/></svg></button>
                <button aria-label="刷新"><svg class="icon-s"><use href="#i-refresh"/></svg></button>
                <i class="tool-divider"></i>
                <button class="selected" aria-label="阅读"><svg class="icon-s"><use href="#i-book"/></svg></button>
                <button aria-label="编辑"><svg class="icon-s"><use href="#i-edit"/></svg></button>
            </div>
            <div class="docs-view">
                <article class="docs-body">
                    <p><a href="#modelica">Modelica</a> &gt; <a href="#blocks">Blocks</a> &gt; <a href="#math">Math</a> &gt; Division</p>
                    <h3>Modelica.Blocks.Math.Division</h3>
                    <p>Output first input divided by second input</p>
                    <h3>说明</h3>
                    <p>This block computes the output (quotient) <b>y</b> by <em>dividing</em> the two inputs <b>u1</b> (dividend) and <b>u2</b> (divisor):</p>
                    <pre>y = u1 / u2;</pre>
                    <h3>接口</h3>
                    <table>
                        <tr><th>类型</th><th>名称</th><th>描述</th></tr>
                        <tr><td>RealInput</td><td>u1</td><td>Connector of Real input signal 1</td></tr>
                        <tr><td>RealInput</td><td>u2</td><td>Connector of Real input signal 2</td></tr>
                        <tr><td>RealOutput</td><td>y</td><td>Connector of Real output signal</td></tr>
                    </table>
                    <h3>基类</h3>
                    <table>
                        <tr><th>名称</th><th>描述</th></tr>
                        <tr><td><a href="#si2so">Interfaces.SI2SO</a></td><td>2 Single Input / 1 Single Output continuous control block</td></tr>
                    </table>
                    <hr>
                    <p>Name: Division</p>
                    <p>Path: Modelica.Blocks.Math.Division</p>
                    <p>FileName: D:\Program Files (x86)\MWORKS\Sysplorer\Sysplorer 2024b SP1\Sysplorer 2024b\Library\Modelica 4.0.0.TY.1\Modelica\Blocks\Math.mo</p>
                </article>
                <div class="docs-scroll"><svg class="caret-lg"><use href="#i-up"/></svg><svg class="caret-lg"><use href="#i-down"/></svg></div>
            </div>
            <div class="highlight"></div>
        </section>

        <aside class="rail rail-right">
            <button class="rail-tab active"><svg class="icon-s" viewBox="0 0 18 18"><circle cx="9" cy="9" r="8.400" fill="#fff" stroke="#555"/><text x="9" y="13.500" text-anchor="middle" class="glyph-i">i</text></svg>文档浏览器</button>
        </aside>
    </main>

    <nav class="bottom-tabs">
        <button class="bottom-tab active"><svg class="icon-s"><use href="#i-params"/></svg>组件参数</button>
        <button class="bottom-tab"><svg class="icon-s"><use href="#i-output"/></svg>输出</button>
        <button class="bottom-tab"><svg class="icon-s"><use href="#i-cmd"/></svg>命令窗口</button>
        <button class="bottom-tab bottom-right"><svg class="icon-s"><use href="#i-vars"/></svg>组件变量</button>
    </nav>

    <footer class="statusbar"><i class="status-box"></i><span>就绪</span><span class="readonly">只读</span></footer>
</body>
</html>
```

FILE: styles.css
```css
* {
    box-sizing: border-box;
}

body {
    margin: 0;
    height: 100vh;
    display: flex;
    flex-direction: column;
    overflow: hidden;
    background-color: #f2f2f2;
    color: #000;
    font-family: 'Noto Sans', 'Noto Sans CJK SC', sans-serif;
    font-size: 15px;
    line-height: 20px;
}

button {
    display: flex;
    align-items: center;
    margin: 0;
    padding: 0;
    border: none;
    background: none;
    color: inherit;
    font: inherit;
    white-space: nowrap;
}

input {
    min-width: 0;
    padding: 0;
    border: none;
    outline: none;
    background: none;
    font: inherit;
}

svg {
    display: block;
    flex: none;
    writing-mode: horizontal-tb;
}

.defs {
    position: absolute;
    width: 0;
    height: 0;
}

/* icon sizes */
.icon-s { width: 18px; height: 18px; }
.icon-m { width: 20px; height: 20px; }
.icon-l { width: 26px; height: 26px; }
.icon-t { width: 24px; height: 22px; }
.icon-w { width: 14px; height: 14px; }
.icon-x { width: 8px; height: 8px; }
.icon-logo { width: 20px; height: 20px; }
.icon-more { width: 8px; height: 9px; }
.caret { width: 8px; height: 5px; }
.caret-lg { width: 10px; height: 6px; color: #666; }

/* letters inside icons */
.glyph-info { font: italic bold 22px 'Liberation Serif', serif; fill: #2a9455; }
.glyph-i { font: italic bold 14px 'Liberation Serif', serif; fill: #444; }
.glyph-help { font: bold 13px 'Open Sans', sans-serif; fill: #1e8a4c; }
.glyph-guide { font: italic bold 16px 'Liberation Serif', serif; fill: #fff; }
.glyph-cad { font: bold 13px 'Open Sans', sans-serif; fill: #fff; }
.glyph-a { font: bold 11px 'Open Sans', sans-serif; fill: #444; }
.glyph-small { font: 9px 'Liberation Sans', sans-serif; fill: #888; }

/* title bar */
.titlebar {
    display: flex;
    align-items: center;
    height: 37px;
    background-color: #dddddd;
}

.quick-tools {
    display: flex;
    align-items: center;
    gap: 9px;
    padding-left: 7px;
}

.icon-logo {
    margin-right: 9px;
}

.window-title {
    flex: 1;
    text-align: center;
}

.window-tools {
    display: flex;
    align-items: center;
    gap: 49px;
    padding-right: 25px;
}

.user {
    gap: 6px;
}

.user .caret {
    margin-left: 6px;
    margin-right: -19px;
}

/* menu row */
.menubar {
    display: flex;
    height: 28px;
    background-color: #dddddd;
}

.menu {
    padding: 0 15px;
}

.menu-file {
    padding: 0 24px 0 23px;
}

.menu.active {
    background-color: #f2f2f2;
    color: #3b82bf;
}

.menubar-tools {
    display: flex;
    align-items: center;
    gap: 8px;
    margin-left: auto;
    padding-right: 4px;
}

.search-top {
    display: flex;
    align-items: center;
    width: 286px;
    height: 22px;
    padding: 0 7px 0 2px;
    border-radius: 4px;
    background-color: #fff;
    color: #777;
}

.search-top input {
    flex: 1;
}

.search-top input::placeholder {
    color: #888;
}

.window-menu {
    gap: 5px;
    margin-left: -3px;
    padding-right: 2px;
}

.window-menu .caret {
    margin-left: 5px;
}

/* ribbon */
.ribbon {
    display: flex;
    align-items: flex-start;
    height: 125px;
    border-bottom: 1px solid #dcdcdc;
}

.group {
    height: 119px;
    padding: 4px 4px 0 4px;
    border-right: 1px solid #cccccc;
}

.group-file {
    padding-right: 3px;
}

.group-tools {
    padding-right: 12px;
}

.group-cad {
    padding-left: 7px;
}

.group-cad .group-items {
    gap: 4px;
}

.group-items {
    display: flex;
    height: 93px;
}

.group-label {
    margin-top: 6px;
    text-align: center;
}

.big {
    flex-direction: column;
    width: 46px;
    padding-top: 12px;
    border: 1px solid transparent;
}

.big.wide {
    width: auto;
    min-width: 70px;
    padding-left: 6px;
    padding-right: 6px;
}

.big span {
    margin-top: 12px;
}

.big .caret {
    margin-top: 8px;
}

.big.selected {
    border-color: #8cc4f2;
    background-color: #aedbff;
}

.divider {
    width: 1px;
    margin: 3px 3px;
    background-color: #cccccc;
}

.stack {
    display: flex;
    flex-direction: column;
    padding: 0 6px;
}

.stack-blocks {
    padding-left: 12px;
}

.small {
    gap: 5px;
    height: 31px;
}

.small .caret {
    margin-left: 10px;
}

.disabled {
    color: #888;
}

/* work area */
.workspace {
    flex: 1;
    min-height: 0;
    display: grid;
    grid-template-columns: 29px 485fr 1057fr 961fr 28px;
}

.rail {
    display: flex;
    flex-direction: column;
    justify-content: space-between;
    background-color: #e8e8e8;
}

.rail-left {
    border-right: 1px solid #c8c8c8;
}

.rail-right {
    border-left: 1px solid #c8c8c8;
}

.rail-tab {
    gap: 5px;
    width: 100%;
    writing-mode: vertical-rl;
    text-orientation: sideways;
}

.rail-tab.active {
    height: 128px;
    border-bottom: 1px solid #c8c8c8;
    background-color: #fff;
}

.rail-left .rail-tab {
    padding: 15px 0;
    transform: rotate(180deg);
}

.rail-left .rail-tab.active {
    border-bottom: none;
    border-top: 1px solid #c8c8c8;
}

.rail-left .icon-s {
    transform: rotate(180deg);
}

.rail-right .rail-tab {
    padding: 16px 0;
}

.pane-head {
    display: flex;
    align-items: center;
    gap: 16px;
    height: 28px;
    padding: 0 8px 2px 5px;
}

.pane-head span {
    flex: 1;
}

.pane-hide {
    width: 12px;
    height: 2px;
    background-color: #666;
}

/* model browser */
.browser {
    display: flex;
    flex-direction: column;
    min-width: 0;
    min-height: 0;
    border-right: 1px solid #c8c8c8;
}

.filter-row {
    display: flex;
    align-items: center;
    gap: 9px;
    height: 28px;
    padding: 0 7px 2px 6px;
}

.mode {
    gap: 8px;
}

.filter-box {
    flex: 1;
    display: flex;
    align-items: center;
    gap: 5px;
    height: 25px;
    padding: 0 8px;
    border-bottom: 1px solid #888;
    background-color: #fff;
    color: #1e8a4c;
}

.filter-box input {
    flex: 1;
}

.result-row {
    display: flex;
    align-items: center;
    gap: 11px;
    height: 30px;
    padding: 0 7px;
    background-color: #e5e5e5;
}

.result-row span {
    flex: 1;
}

.step {
    justify-content: center;
    width: 18px;
    height: 18px;
    border: 1px solid #333;
    background-color: #fff;
}

.tree-wrap {
    flex: 1;
    display: flex;
    min-height: 0;
}

.tree-main {
    flex: 1;
    min-width: 0;
    overflow: hidden;
    border-right: 1px solid #fff;
}

.tree-head {
    display: flex;
    align-items: center;
    height: 22px;
    padding-left: 4px;
    border-top: 1px solid #fff;
    border-bottom: 1px solid #999;
    color: #999;
}

.tree-head span {
    flex: 1;
    text-align: center;
    color: #000;
}

.tree {
    margin: 0;
    padding: 0;
    list-style: none;
}

.tree li {
    display: flex;
    align-items: center;
    height: 29px;
}

.tree button {
    flex: 1;
    gap: 7px;
    height: 29px;
    padding-left: 3px;
}

.tree span {
    padding-bottom: 2px;
}

.chev {
    width: 10px;
    height: 10px;
    margin: 0 2px;
}

.l2 { padding-left: 14px; }
.l3 { padding-left: 28px; }
.l4 { padding-left: 42px; }
.l4.leaf { padding-left: 56px; }

.current button {
    background-color: #cdcdcd;
}

.scroll {
    width: 17px;
    padding: 18px 6px 0 8px;
}

.thumb {
    display: block;
    width: 3px;
    height: 35%;
    background-color: #888;
}

/* diagram editor */
.editor {
    display: flex;
    flex-direction: column;
    min-width: 0;
    background-color: #fff;
}

.doc-tabs {
    display: flex;
    height: 29px;
    padding: 1px 1px 0;
    background-color: #efefef;
}

.doc-tab {
    display: flex;
    align-items: center;
    gap: 6px;
    padding: 0 21px 0 16px;
    background-color: #fff;
    color: #0b82d0;
}

.doc-tab span {
    margin-right: 4px;
}

.doc-tab button {
    color: #444;
}

.path-row {
    display: flex;
    align-items: center;
    gap: 9px;
    height: 27px;
    padding-left: 5px;
    border-bottom: 1px solid #c8c8c8;
}

.path-arrow {
    width: 6px;
    height: 12px;
}

.canvas {
    flex: 545;
    min-height: 0;
}

.canvas svg {
    width: 100%;
    height: 100%;
}

.canvas text {
    font: 13px 'Liberation Sans', sans-serif;
    fill: #00007f;
}

.params {
    flex: 531;
    display: flex;
    flex-direction: column;
    min-height: 0;
    border-top: 1px solid #c8c8c8;
    background-color: #f2f2f2;
}

.empty {
    flex: 1;
    display: flex;
    align-items: center;
    justify-content: center;
    margin: 0;
}

/* documentation */
.docs {
    position: relative;
    display: flex;
    flex-direction: column;
    min-width: 0;
    min-height: 0;
    border-left: 1px solid #c8c8c8;
    background-color: #f3f3f3;
}

.docs-tools {
    display: flex;
    align-items: center;
    gap: 12px;
    height: 28px;
    margin-left: 9px;
    padding-bottom: 2px;
    padding-left: 8px;
    border-bottom: 1px solid #c8c8c8;
}

.tool-divider {
    width: 1px;
    height: 20px;
    background-color: #ccc;
}

.docs-tools .selected {
    justify-content: center;
    width: 27px;
    height: 25px;
    margin: 0 -8px 0 -4px;
    border: 1px solid #8cc4f2;
    border-radius: 2px;
    background-color: #cce8ff;
}

.docs-view {
    flex: 1;
    display: flex;
    min-height: 0;
}

.docs-body {
    flex: 1;
    min-width: 0;
    padding: 18px 10px 0 20px;
    overflow: hidden;
    color: #333;
    font-family: 'Open Sans', 'Noto Sans CJK SC', sans-serif;
    font-size: 17px;
    line-height: 25px;
}

.docs-body p {
    margin: 0 0 16px;
}

.docs-body h3 {
    margin: 21px 0;
    font-size: 20px;
    line-height: 28px;
}

.docs-body a {
    color: #0000ee;
}

.docs-body pre {
    height: 74px;
    margin: 59px 0 64px;
    padding: 11px 14px;
    border: 1px solid #ebe6e3;
    border-radius: 4px;
    background-color: #f6f2ef;
    font: 13px/25px 'DejaVu Sans Mono', monospace;
}

.docs-body table {
    margin-bottom: 23px;
    border-spacing: 2px;
}

.docs-body th {
    padding: 3px 5px;
    border: 1px solid #c8c8c8;
    border-right-width: 3px;
    background-color: #f6f2ef;
    font-size: 17px;
}

.docs-body td {
    padding: 3px 16px 3px 10px;
    border: 1px solid #c8c8c8;
}

.docs-body hr {
    margin: 50px 20px 90px;
    border: none;
    border-top: 1px solid #c8c8c8;
}

.docs-scroll {
    display: flex;
    flex-direction: column;
    align-items: center;
    justify-content: space-between;
    width: 22px;
    padding: 9px 0;
    background-color: #f0f0f0;
}

.docs-scroll .caret-lg {
    color: #999;
}

.highlight {
    position: absolute;
    top: 48px;
    right: 50px;
    bottom: 244px;
    left: -10px;
    border: 2px solid #ed1c24;
    pointer-events: none;
}

/* bottom */
.bottom-tabs {
    display: flex;
    height: 29px;
    padding-left: 28px;
    border-top: 1px solid #c8c8c8;
    background-color: #e8e8e8;
}

.bottom-tab {
    gap: 6px;
    padding: 0 15px;
}

.bottom-tab.active {
    border-right: 1px solid #c8c8c8;
    background-color: #fff;
}

.bottom-right {
    margin-left: auto;
    padding-right: 43px;
}

.statusbar {
    display: flex;
    align-items: center;
    height: 29px;
    padding: 0 165px 0 6px;
    background-color: #3b82bf;
    color: #fff;
}

.status-box {
    width: 15px;
    height: 15px;
    margin-right: 11px;
    border: 1px solid #fff;
}

.readonly {
    margin-left: auto;
}
```
